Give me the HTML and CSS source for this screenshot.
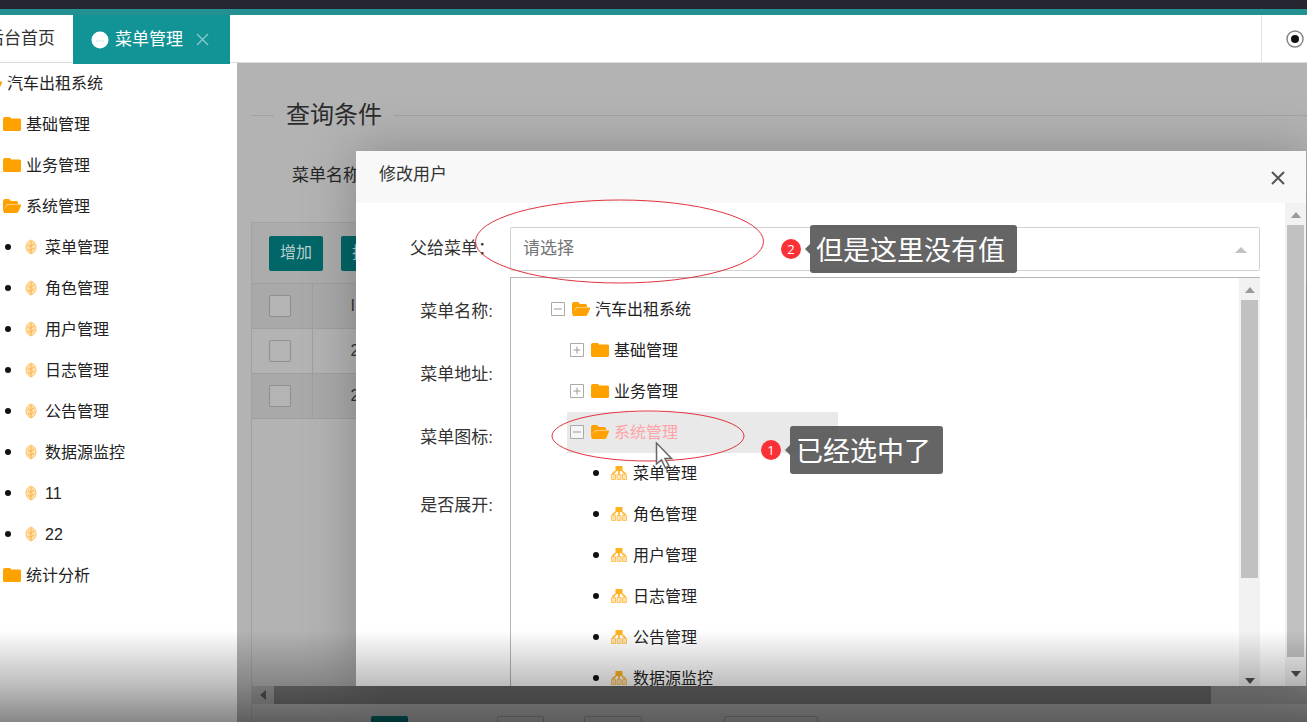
FILE: index.html
```html
<!DOCTYPE html>
<html lang="zh-CN">
<head>
<meta charset="utf-8">
<title>菜单管理</title>
<link rel="stylesheet" href="styles.css">
</head>
<body>
<svg class="defs" width="0" height="0" aria-hidden="true">
  <symbol id="folder" viewBox="0 0 18 16"><path fill="#ffa200" d="M0 3a2 2 0 0 1 2-2h4.500a1.500 1.500 0 0 1 1.500 1.500h8A1.500 1.500 0 0 1 18 4v9.500a1.500 1.500 0 0 1-1.500 1.500H1.500A1.500 1.500 0 0 1 0 13.500z"/></symbol>
  <symbol id="folder-open" viewBox="0 0 18 16"><path fill="#ffa200" d="M0 3a2 2 0 0 1 2-2h4l2 2h5.500A1.500 1.500 0 0 1 15 4.500V6H6Q4 6 3 8L0 13z"/><path fill="#ffa200" d="M6 6.500H18.500l-3 7Q14.800 15 13 15H1L0 12 3.500 8Q4.500 6.500 6 6.500z"/><path fill="none" stroke="#ffc86a" d="M3 8.500Q4 6.500 6 6.500h9"/></symbol>
  <symbol id="leaf" viewBox="0 0 18 16"><path fill="#ffe0ab" stroke="#ffc466" d="M9 1c3.500 1.500 5 4 5 7s-1.500 5.500-5 7C5.500 13.500 4 11 4 8s1.500-5.500 5-7z"/><path fill="none" stroke="#fbb04a" d="M9 2v13M9 7l3-2M9 11l3-2M9 8L6 6M9 12l-3-2"/></symbol>
  <symbol id="nodes" viewBox="0 0 18 16"><path fill="#ffb21f" d="M5.500 1h7v5h-7z"/><path fill="none" stroke="#ffbd45" stroke-width="2" d="M9 6v4M3 10V8.500L6 6M15 10V8.500L12 6"/><path fill="#ffe2ae" stroke="#ffc55c" d="M1.500 9.500h4v5h-4zM7 9.500h4v5H7zM12.500 9.500h4v5h-4z"/></symbol>
  <symbol id="minus" viewBox="0 0 14 14"><path fill="#fff" fill-opacity=".6" stroke="#aaa" d="M.5.5h13v13H.5z"/><path stroke="#999" d="M3 7h8"/></symbol>
  <symbol id="plus" viewBox="0 0 14 14"><path fill="#fff" stroke="#aaa" d="M.5.5h13v13H.5z"/><path stroke="#999" d="M3.500 7h7M7 3.500v7"/></symbol>
</svg>

<div class="topbar"></div>
<nav class="tabs">
  <a class="tab tab-home" href="#">后台首页</a>
  <div class="tab tab-active">
    <svg width="18" height="18" viewBox="0 0 18 18"><circle cx="9" cy="9" r="8.500" fill="#fff"/><path stroke="#cfe9e9" d="M5 10h8"/></svg>
    <a href="#">菜单管理</a>
    <button class="plain tab-close" type="button" aria-label="关闭标签"><svg width="13" height="13" viewBox="0 0 13 13"><path stroke="#7fc6c8" stroke-width="1.500" d="M1 1l11 11M12 1L1 12"/></svg></button>
  </div>
  <button class="plain tab-tools" type="button" aria-label="页面操作"><svg width="18" height="18" viewBox="0 0 18 18"><circle cx="9" cy="9" r="8" fill="#fff" stroke="#8a8487" stroke-width="1.500"/><circle cx="9" cy="9" r="4" fill="#111"/></svg></button>
</nav>

<div class="main">
  <aside class="sidebar">
    <ul class="tree">
      <li><div class="node"><span class="toggle"></span><svg class="ico"><use href="#folder-open"/></svg><span>汽车出租系统</span></div>
        <ul>
          <li><div class="node"><span class="toggle"></span><svg class="ico"><use href="#folder"/></svg><span>基础管理</span></div></li>
          <li><div class="node"><span class="toggle"></span><svg class="ico"><use href="#folder"/></svg><span>业务管理</span></div></li>
          <li><div class="node"><span class="toggle"></span><svg class="ico"><use href="#folder-open"/></svg><span>系统管理</span></div>
            <ul>
              <li><div class="node"><i class="dot"></i><svg class="ico"><use href="#leaf"/></svg><span>菜单管理</span></div></li>
              <li><div class="node"><i class="dot"></i><svg class="ico"><use href="#leaf"/></svg><span>角色管理</span></div></li>
              <li><div class="node"><i class="dot"></i><svg class="ico"><use href="#leaf"/></svg><span>用户管理</span></div></li>
              <li><div class="node"><i class="dot"></i><svg class="ico"><use href="#leaf"/></svg><span>日志管理</span></div></li>
              <li><div class="node"><i class="dot"></i><svg class="ico"><use href="#leaf"/></svg><span>公告管理</span></div></li>
              <li><div class="node"><i class="dot"></i><svg class="ico"><use href="#leaf"/></svg><span>数据源监控</span></div></li>
              <li><div class="node"><i class="dot"></i><svg class="ico"><use href="#leaf"/></svg><span>11</span></div></li>
              <li><div class="node"><i class="dot"></i><svg class="ico"><use href="#leaf"/></svg><span>22</span></div></li>
            </ul>
          </li>
          <li><div class="node"><span class="toggle"></span><svg class="ico"><use href="#folder"/></svg><span>统计分析</span></div></li>
        </ul>
      </li>
    </ul>
  </aside>

  <section class="content">
    <fieldset class="query">
      <legend>查询条件</legend>
      <div class="query-label">菜单名称</div>
    </fieldset>
    <div class="grid">
      <div class="toolbar">
        <button class="btn" type="button">增加</button>
        <button class="btn" type="button">批量删除</button>
      </div>
      <table>
        <tr class="shade"><th class="pick"><input type="checkbox" aria-label="全选"></th><th>ID</th></tr>
        <tr><td class="pick"><input type="checkbox" aria-label="选择第一行"></td><td>2</td></tr>
        <tr class="shade"><td class="pick"><input type="checkbox" aria-label="选择第二行"></td><td>2</td></tr>
      </table>
      <div class="grid-space"></div>
      <div class="hscroll"><svg class="hscroll-arrow" width="6" height="10" viewBox="0 0 6 10"><path fill="#555" d="M6 0v10L0 5z"/></svg><div class="hscroll-thumb"></div></div>
      <div class="pager"><span class="page-on"></span><span class="page-box"></span><span class="page-box page-mid"></span><span class="page-box page-wide"></span></div>
    </div>

    <div class="dialog" role="dialog" aria-label="修改用户">
      <header class="dialog-head">
        <span>修改用户</span>
        <button class="plain" type="button" aria-label="关闭"><svg width="14" height="14" viewBox="0 0 14 14"><path stroke="#55555a" stroke-width="2" d="M1 1l12 12M13 1L1 13"/></svg></button>
      </header>
      <div class="dialog-body">
        <form class="form">
          <div class="row">
            <label for="parent">父给菜单：</label>
            <div class="field">
              <select id="parent"><option>请选择</option></select>
              <svg class="caret" width="12" height="6" viewBox="0 0 12 6"><path fill="#c2c2c2" d="M6 0l6 6H0z"/></svg>
              <div class="drop">
                <ul class="tree">
                  <li><div class="node"><button class="plain toggle" type="button" aria-label="收起"><svg width="14" height="14"><use href="#minus"/></svg></button><svg class="ico"><use href="#folder-open"/></svg><span>汽车出租系统</span></div>
                    <ul>
                      <li><div class="node"><button class="plain toggle" type="button" aria-label="展开"><svg width="14" height="14"><use href="#plus"/></svg></button><svg class="ico"><use href="#folder"/></svg><span>基础管理</span></div></li>
                      <li><div class="node"><button class="plain toggle" type="button" aria-label="展开"><svg width="14" height="14"><use href="#plus"/></svg></button><svg class="ico"><use href="#folder"/></svg><span>业务管理</span></div></li>
                      <li><div class="node picked"><button class="plain toggle" type="button" aria-label="收起"><svg width="14" height="14"><use href="#minus"/></svg></button><svg class="ico"><use href="#folder-open"/></svg><span>系统管理</span></div>
                        <ul>
                          <li><div class="node"><i class="dot"></i><svg class="ico"><use href="#nodes"/></svg><span>菜单管理</span></div></li>
                          <li><div class="node"><i class="dot"></i><svg class="ico"><use href="#nodes"/></svg><span>角色管理</span></div></li>
                          <li><div class="node"><i class="dot"></i><svg class="ico"><use href="#nodes"/></svg><span>用户管理</span></div></li>
                          <li><div class="node"><i class="dot"></i><svg class="ico"><use href="#nodes"/></svg><span>日志管理</span></div></li>
                          <li><div class="node"><i class="dot"></i><svg class="ico"><use href="#nodes"/></svg><span>公告管理</span></div></li>
                          <li><div class="node"><i class="dot"></i><svg class="ico"><use href="#nodes"/></svg><span>数据源监控</span></div></li>
                        </ul>
                      </li>
                    </ul>
                  </li>
                </ul>
                <div class="vscroll"><svg width="10" height="6" viewBox="0 0 10 6"><path fill="#999" d="M5 0l5 6H0z"/></svg><div class="thumb thumb-short"></div><svg width="10" height="6" viewBox="0 0 10 6"><path fill="#505050" d="M0 0h10L5 6z"/></svg></div>
              </div>
            </div>
          </div>
          <div class="row"><span class="label">菜单名称:</span></div>
          <div class="row"><span class="label">菜单地址:</span></div>
          <div class="row"><span class="label">菜单图标:</span></div>
          <div class="row row-last"><span class="label">是否展开:</span></div>
        </form>
        <div class="vscroll"><svg width="10" height="6" viewBox="0 0 10 6"><path fill="#999" d="M5 0l5 6H0z"/></svg><div class="thumb"></div><svg width="10" height="6" viewBox="0 0 10 6"><path fill="#505050" d="M0 0h10L5 6z"/></svg></div>
      </div>
    </div>
  </section>
</div>

<div class="fade"></div>

<svg class="marks" width="1040" height="480" viewBox="0 0 1040 480" aria-hidden="true">
  <ellipse cx="619.500" cy="241.500" rx="144" ry="41.500" fill="none" stroke="#e0343f"/>
  <ellipse cx="648" cy="436" rx="96" ry="25" fill="none" stroke="#e0343f"/>
  <path fill="#fff" fill-opacity=".8" stroke="#666" stroke-width="1.500" d="M656.500 443v21l5-4 4 8 3.500-2-4-7.500h6.500z"/>
</svg>
<div class="note note-two"><span class="num">2</span><span class="tip"></span><span class="say">但是这里没有值</span></div>
<div class="note note-one"><span class="num">1</span><span class="tip"></span><span class="say">已经选中了</span></div>
</body>
</html>
```
FILE: styles.css
```css
* { box-sizing: border-box; }

body {
  position: relative;
  display: flex;
  flex-direction: column;
  height: 100vh;
  margin: 0;
  overflow: hidden;
  background: #fff;
  color: #333;
  font: 16px/24px "Liberation Sans", "Noto Sans CJK SC", sans-serif;
}

ul { margin: 0; padding: 0; list-style: none; }
svg { display: block; flex: none; }
a { color: inherit; text-decoration: none; }
.defs { position: absolute; }

.plain {
  display: flex;
  align-items: center;
  justify-content: center;
  padding: 0;
  border: 0;
  background: none;
}

/* top */
.topbar { flex: none; height: 15px; background: #25262f; border-bottom: 6px solid #239092; }
.tabs {
  display: flex;
  flex: none;
  height: 48px;
  border-bottom: 1px solid #dcdcdc;
  font-size: 17px;
}
.tab { display: flex; align-items: center; white-space: nowrap; }
.tab-home { width: 73px; padding-right: 18px; justify-content: flex-end; overflow: hidden; color: #333; }
.tab-active { height: 49px; width: 157px; padding-left: 18px; gap: 6px; background: #129497; color: #fff; z-index: 1; }
.tab-close { margin-left: 7px; }
.tab-tools { width: 46px; margin-left: auto; padding-left: 20px; border-left: 1px solid #e4e4e4; }

.main { display: flex; flex: 1; min-height: 0; }

/* tree */
.tree ul { padding-left: 19px; }
.node { display: flex; align-items: center; height: 41px; padding-left: 3px; white-space: nowrap; color: #222; }
.toggle { flex: none; width: 14px; height: 14px; margin: 0 7px 2px 0; }
.ico { width: 18px; height: 16px; margin: 0 5px 2px 0; }
.dot { flex: none; width: 6px; height: 6px; margin: 0 11px 2px 4px; border-radius: 50%; background: #111; }
.picked { width: 271px; background: #e9e9e9; color: #ffa3a8; }

.sidebar { flex: none; width: 237px; overflow: hidden; background: #fff; }
.sidebar .tree { margin-left: -40px; }

/* list page */
.content {
  position: relative;
  display: flex;
  flex: 1;
  flex-direction: column;
  min-width: 0;
  padding: 35px 0 0 14px;
  overflow: hidden;
  background: #b3b3b3;
}
.query { margin: 0; padding: 0; border: 0; border-top: 1px solid #a2a2a2; height: 124px; flex: none; }
.query legend { margin-left: 23px; padding: 0 12px; font-size: 24px; line-height: 34px; color: #2c2c2c; }
.query-label { padding: 32px 0 0 41px; font-size: 17px; color: #262626; }

.grid { display: flex; flex: 1; flex-direction: column; min-height: 0; border: 1px solid #a3a3a3; border-right: 0; border-bottom: 0; }
.toolbar { display: flex; flex: none; align-items: center; gap: 18px; height: 60px; padding-left: 17px; background: #acacac; }
.btn { height: 35px; padding: 0 11px; border: 0; border-radius: 2px; background: #006667; color: #b9cccc; font: inherit; }
table { width: 100%; border-collapse: collapse; }
th, td { height: 45px; padding: 0 0 0 38px; border: 1px solid #a0a0a0; border-left: 0; text-align: left; font-weight: 400; }
.shade { background: #a9a9a9; }
.pick { width: 60px; padding: 0 0 0 17px; }
.pick input { display: block; width: 22px; height: 22px; margin: 0; appearance: none; border: 1px solid #8f8f8f; border-radius: 2px; background: #b4b4b4; }
.grid-space { flex: 1; }
.hscroll { display: flex; flex: none; align-items: center; height: 18px; padding: 0 96px 0 8px; background: #a0a0a0; }
.hscroll-arrow { margin-right: 8px; }
.hscroll-thumb { flex: 1; height: 18px; background: #747474; }
.pager { display: flex; flex: none; height: 18px; padding: 12px 0 0 119px; }
.page-on { width: 37px; background: #006667; border-radius: 2px 2px 0 0; margin-right: 89px; }
.page-box { width: 47px; border: 1px solid #939393; border-bottom: 0; border-radius: 2px 2px 0 0; }
.page-mid { width: 58px; margin-left: 40px; }
.page-wide { width: 94px; margin-left: 82px; }

/* dialog */
.dialog {
  position: absolute;
  top: 88px;
  right: 1px;
  bottom: 36px;
  left: 119px;
  display: flex;
  flex-direction: column;
  background: #fff;
  box-shadow: 1px 1px 50px rgba(0, 0, 0, .25);
}
.dialog-head {
  display: flex;
  flex: none;
  align-items: center;
  justify-content: space-between;
  height: 52px;
  padding: 0 21px 4px 23px;
  background: #f8f8f8;
  font-size: 17px;
}
.dialog-head button { padding-top: 6px; }
.dialog-body { display: flex; flex: 1; min-height: 0; overflow: hidden; }
.form { flex: 1; padding: 24px 25px 0 0; font-size: 17px; }
.row { display: flex; align-items: center; height: 44px; margin-bottom: 19px; }
.row-last { margin-top: 24px; }
.row label, .label { flex: none; width: 154px; padding-right: 15px; text-align: right; white-space: nowrap; }
.row .label { padding-right: 17px; }
.field { position: relative; flex: 1; }
.field select {
  display: block;
  width: 100%;
  height: 44px;
  padding: 0 12px;
  appearance: none;
  border: 1px solid #d2d2d2;
  border-radius: 2px;
  background: #fff;
  color: #757575;
  font: inherit;
}
.caret { position: absolute; top: 20px; right: 13px; }
.drop {
  position: absolute;
  top: 50px;
  left: 0;
  display: flex;
  width: 100%;
  height: 417px;
  border: 1px solid #b5b5b5;
  border-right: 0;
  background: #fff;
  font-size: 16px;
}
.drop .tree { flex: 1; padding: 11px 0 0 37px; overflow: hidden; }
.vscroll { display: flex; flex: none; flex-direction: column; align-items: center; width: 21px; padding: 9px 0; background: #f2f2f2; }
.thumb { flex: 1; width: 17px; margin: 7px 0 14px; background: #c1c1c1; }
.thumb-short { flex: none; height: 278px; margin: 7px 0 auto; }

/* bottom darkening */
.fade {
  position: absolute;
  right: 0;
  bottom: 0;
  left: 0;
  height: 92px;
  background: linear-gradient(rgba(0, 0, 0, 0), rgba(0, 0, 0, .26) 60%, rgba(0, 0, 0, .47));
  pointer-events: none;
}

/* annotations */
.marks { position: absolute; top: 0; left: 0; pointer-events: none; }
.note { position: absolute; display: flex; align-items: center; color: #fff; }
.note-two { top: 225px; left: 781px; }
.note-one { top: 426px; left: 761px; }
.num { width: 20px; height: 20px; border-radius: 50%; background: #fb3138; font-size: 13px; line-height: 20px; text-align: center; font-family: "Open Sans", sans-serif; }
.tip { margin-left: 4px; border: 5px solid transparent; border-left: 0; border-right-color: #666; }
.say { height: 48px; padding: 0 12px 0 6px; border-radius: 3px; background: rgba(80, 80, 80, .88); font-size: 27px; line-height: 52px; white-space: nowrap; }
```
